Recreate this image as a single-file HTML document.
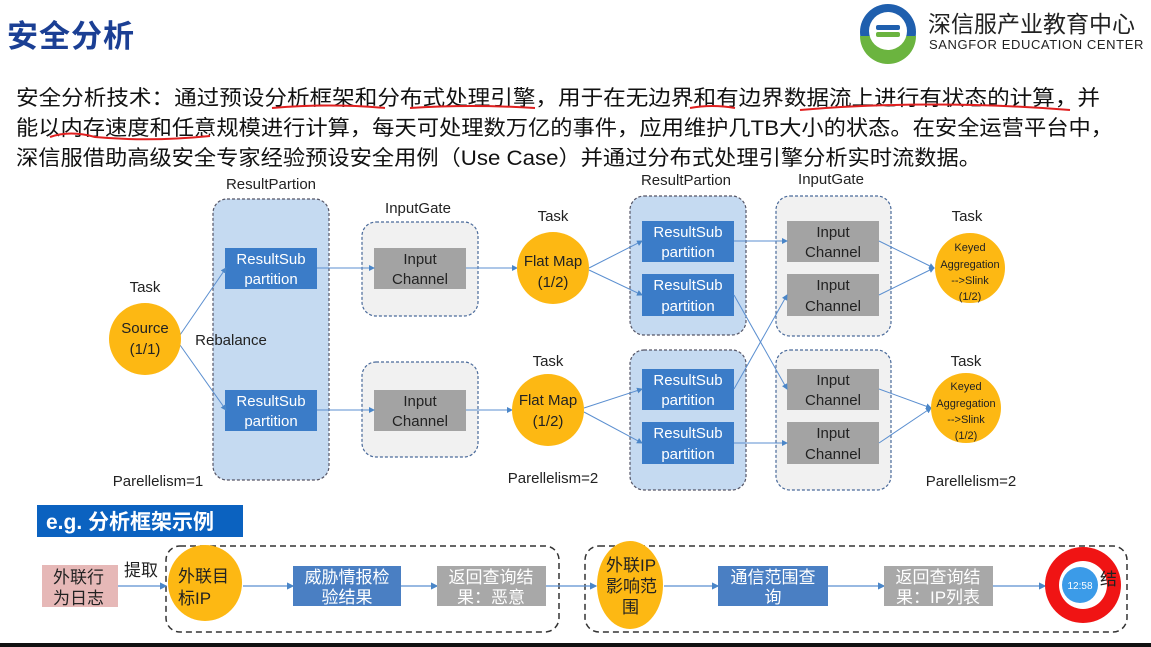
<!DOCTYPE html>
<html><head><meta charset="utf-8"><style>
body{margin:0;width:1151px;height:647px;overflow:hidden;background:#fff;font-family:"Liberation Sans","Noto Sans CJK SC",sans-serif;position:relative}
.t{position:absolute;white-space:nowrap}
svg text{font-family:"Liberation Sans","Noto Sans CJK SC",sans-serif}
</style></head><body>
<div class="t" style="left:7px;top:11px;font-size:31px;font-weight:bold;color:#1b3f94;letter-spacing:1px">安全分析</div>
<svg width="1151" height="647" style="position:absolute;left:0;top:0">
<defs><marker id="a" markerWidth="6" markerHeight="6" refX="5" refY="3" orient="auto"><path d="M0,0 L6,3 L0,6z" fill="#4a86c8"/></marker>
<marker id="b" markerWidth="6" markerHeight="6" refX="5" refY="3" orient="auto"><path d="M0,0 L6,3 L0,6z" fill="#4a86c8"/></marker></defs>
<!-- logo -->
<circle cx="888" cy="32" r="28" fill="#1f5fae"/>
<path d="M860,36 A28,28 0 0 0 916,36z" fill="#6bb43f"/>
<circle cx="888" cy="31" r="19" fill="#fff"/>
<rect x="876" y="25" width="24" height="5" rx="2" fill="#1f5fae"/>
<rect x="876" y="32" width="24" height="5" rx="2" fill="#6bb43f"/>
<text x="928" y="32" font-size="23" fill="#222">深信服产业教育中心</text>
<text x="929" y="49" font-size="13" fill="#222" letter-spacing="0.6">SANGFOR EDUCATION CENTER</text>
<!-- paragraph -->
<g font-size="21" fill="#111">
<text x="16" y="105" textLength="1084" lengthAdjust="spacingAndGlyphs">安全分析技术：通过预设分析框架和分布式处理引擎，用于在无边界和有边界数据流上进行有状态的计算，并</text>
<text x="16" y="135" textLength="1097" lengthAdjust="spacingAndGlyphs">能以内存速度和任意规模进行计算，每天可处理数万亿的事件，应用维护几TB大小的状态。在安全运营平台中，</text>
<text x="16" y="165" textLength="965" lengthAdjust="spacingAndGlyphs">深信服借助高级安全专家经验预设安全用例（Use Case）并通过分布式处理引擎分析实时流数据。</text>
</g>
<g stroke="#e02020" stroke-width="2" fill="none">
<path d="M272,108 Q330,103 385,108"/><path d="M410,108 Q470,104 535,108"/>
<path d="M690,108 Q712,104 735,108"/><path d="M800,110 Q930,99 1070,110"/>
<path d="M50,137 Q70,130 95,137 Q150,142 210,136"/>
</g>
<!-- diagram boxes -->
<g stroke="#556" stroke-dasharray="3,2" stroke-width="1.2">
<rect x="213" y="199" width="116" height="281" rx="14" fill="#c5daf1"/>
<rect x="630" y="196" width="116" height="139" rx="14" fill="#c5daf1"/>
<rect x="630" y="350" width="116" height="140" rx="14" fill="#c5daf1"/>
<rect x="362" y="222" width="116" height="94" rx="14" fill="#f1f1f1" stroke="#4a6a9a"/>
<rect x="362" y="362" width="116" height="95" rx="14" fill="#f1f1f1" stroke="#4a6a9a"/>
<rect x="776" y="196" width="115" height="140" rx="14" fill="#f1f1f1" stroke="#4a6a9a"/>
<rect x="776" y="350" width="115" height="140" rx="14" fill="#f1f1f1" stroke="#4a6a9a"/>
</g>
<g fill="#3b7cc8">
<rect x="225" y="248" width="92" height="41"/><rect x="225" y="390" width="92" height="41"/>
<rect x="642" y="221" width="92" height="41"/><rect x="642" y="274" width="92" height="42"/>
<rect x="642" y="369" width="92" height="41"/><rect x="642" y="422" width="92" height="42"/>
</g>
<g fill="#a3a3a3">
<rect x="374" y="248" width="92" height="41"/><rect x="374" y="390" width="92" height="41"/>
<rect x="787" y="221" width="92" height="41"/><rect x="787" y="274" width="92" height="42"/>
<rect x="787" y="369" width="92" height="41"/><rect x="787" y="422" width="92" height="42"/>
</g>
<g stroke="#5b8fd0" stroke-width="1" fill="none" marker-end="url(#a)">
<path d="M180,335 L226,268"/><path d="M180,345 L226,410"/>
<path d="M317,268 L374,268"/><path d="M317,410 L374,410"/>
<path d="M466,268 L517,268"/><path d="M466,410 L512,410"/>
<path d="M589,268 L642,241"/><path d="M589,270 L642,295"/>
<path d="M584,408 L642,389"/><path d="M584,412 L642,443"/>
<path d="M734,241 L787,241"/><path d="M734,295 L787,389"/>
<path d="M734,389 L787,295"/><path d="M734,443 L787,443"/>
<path d="M879,241 L934,268"/><path d="M879,295 L934,268"/>
<path d="M879,389 L931,408"/><path d="M879,443 L931,408"/>
</g>
<g fill="#fdb813">
<circle cx="145" cy="339" r="36"/><circle cx="553" cy="268" r="36"/><circle cx="548" cy="410" r="36"/>
<circle cx="970" cy="268" r="35"/><circle cx="966" cy="408" r="35"/>
</g>
<g font-size="15" fill="#222" text-anchor="middle">
<text x="271" y="189">ResultPartion</text><text x="418" y="213">InputGate</text>
<text x="686" y="185">ResultPartion</text><text x="831" y="184">InputGate</text>
<text x="145" y="292">Task</text><text x="553" y="221">Task</text><text x="548" y="366">Task</text>
<text x="967" y="221">Task</text><text x="966" y="366">Task</text>
<text x="231" y="345">Rebalance</text>
<text x="158" y="486">Parellelism=1</text><text x="553" y="483">Parellelism=2</text><text x="971" y="486">Parellelism=2</text>
<text x="145" y="333">Source</text><text x="145" y="354">(1/1)</text>
<text x="553" y="266">Flat Map</text><text x="553" y="287">(1/2)</text>
<text x="548" y="405">Flat Map</text><text x="548" y="426">(1/2)</text>
</g>
<g font-size="11" fill="#222" text-anchor="middle">
<text x="970" y="251">Keyed</text><text x="970" y="268">Aggregation</text><text x="970" y="284">-->Slink</text><text x="970" y="300">(1/2)</text>
<text x="966" y="390">Keyed</text><text x="966" y="407">Aggregation</text><text x="966" y="423">-->Slink</text><text x="966" y="439">(1/2)</text>
</g>
<g font-size="15" text-anchor="middle" fill="#fff">
<text x="271" y="264">ResultSub</text><text x="271" y="284">partition</text>
<text x="271" y="406">ResultSub</text><text x="271" y="426">partition</text>
<text x="688" y="237">ResultSub</text><text x="688" y="257">partition</text>
<text x="688" y="290">ResultSub</text><text x="688" y="311">partition</text>
<text x="688" y="385">ResultSub</text><text x="688" y="405">partition</text>
<text x="688" y="438">ResultSub</text><text x="688" y="459">partition</text>
</g>
<g font-size="15" text-anchor="middle" fill="#222">
<text x="420" y="264">Input</text><text x="420" y="284">Channel</text>
<text x="420" y="406">Input</text><text x="420" y="426">Channel</text>
<text x="833" y="237">Input</text><text x="833" y="257">Channel</text>
<text x="833" y="290">Input</text><text x="833" y="311">Channel</text>
<text x="833" y="385">Input</text><text x="833" y="405">Channel</text>
<text x="833" y="438">Input</text><text x="833" y="459">Channel</text>
</g>
<!-- bottom -->
<rect x="37" y="505" width="206" height="32" fill="#0b62c0"/>
<text x="46" y="529" font-size="21" font-weight="bold" fill="#fff">e.g. 分析框架示例</text>
<g stroke="#333" stroke-dasharray="6,4" stroke-width="1.5" fill="none">
<rect x="166" y="546" width="393" height="86" rx="14"/>
<rect x="585" y="546" width="542" height="86" rx="14"/>
</g>
<g stroke="#5b8fd0" stroke-width="1.2" fill="none" marker-end="url(#b)">
<path d="M118,586 L166,586"/><path d="M243,586 L293,586"/><path d="M401,586 L437,586"/>
<path d="M546,586 L596,586"/><path d="M664,586 L718,586"/><path d="M828,586 L884,586"/><path d="M993,586 L1045,586"/>
</g>
<rect x="42" y="565" width="76" height="42" fill="#e6b8b7"/>
<rect x="293" y="566" width="108" height="40" fill="#4a7fc3"/>
<rect x="437" y="566" width="109" height="40" fill="#a8a8a8"/>
<rect x="718" y="566" width="110" height="40" fill="#4a7fc3"/>
<rect x="884" y="566" width="109" height="40" fill="#a8a8a8"/>
<ellipse cx="205" cy="583" rx="37" ry="38" fill="#fdb813"/>
<ellipse cx="630" cy="585" rx="33" ry="44" fill="#fdb813"/>
<circle cx="1083" cy="585" r="38" fill="#f01414"/>
<circle cx="1083" cy="585" r="24" fill="#fff"/>
<circle cx="1080" cy="585" r="18" fill="#3b9be8"/>
<g font-size="17" fill="#222">
<text x="53" y="583">外联行</text><text x="53" y="604">为日志</text>
<text x="124" y="576">提取</text>
<text x="178" y="582">外联目</text><text x="178" y="604">标IP</text>
<text x="606" y="571">外联IP</text><text x="606" y="592">影响范</text><text x="622" y="613">围</text>
<text x="1100" y="585">结</text>
</g>
<g font-size="17" fill="#fff" text-anchor="middle">
<text x="347" y="583">威胁情报检</text><text x="347" y="603">验结果</text>
<text x="491" y="583">返回查询结</text><text x="491" y="603">果：恶意</text>
<text x="773" y="583">通信范围查</text><text x="773" y="603">询</text>
<text x="938" y="583">返回查询结</text><text x="938" y="603">果：IP列表</text>
</g>
<text x="1080" y="589" font-size="10" fill="#fff" text-anchor="middle">12:58</text>
<rect x="0" y="643" width="1151" height="4" fill="#111"/>
</svg>
</body></html>
